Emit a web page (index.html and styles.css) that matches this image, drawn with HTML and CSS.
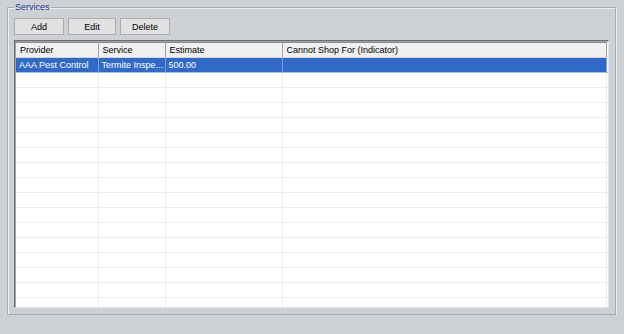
FILE: index.html
```html
<!DOCTYPE html>
<html>
<head>
  <meta charset="UTF-8">
  <title>Services</title>
  <link rel="stylesheet" href="styles.css">
</head>
<body>
  <fieldset class="group">
    <legend class="group-title">Services</legend>

    <div class="toolbar">
      <button class="btn btn-add">Add</button>
      <button class="btn btn-edit">Edit</button>
      <button class="btn btn-delete">Delete</button>
    </div>

    <div class="listview">
      <table class="grid">
        <colgroup>
          <col class="c-provider">
          <col class="c-service">
          <col class="c-estimate">
          <col class="c-indicator">
          <col>
        </colgroup>
        <thead>
          <tr>
            <th>Provider</th>
            <th>Service</th>
            <th>Estimate</th>
            <th>Cannot Shop For (Indicator)</th>
            <th class="filler"></th>
          </tr>
        </thead>
        <tbody>
          <tr class="selected">
            <td>AAA Pest Control</td>
            <td>Termite Inspe...</td>
            <td>500.00</td>
            <td></td>
            <td class="filler"></td>
          </tr>
          <tr><td></td><td></td><td></td><td></td><td class="filler"></td></tr>
          <tr><td></td><td></td><td></td><td></td><td class="filler"></td></tr>
          <tr><td></td><td></td><td></td><td></td><td class="filler"></td></tr>
          <tr><td></td><td></td><td></td><td></td><td class="filler"></td></tr>
          <tr><td></td><td></td><td></td><td></td><td class="filler"></td></tr>
          <tr><td></td><td></td><td></td><td></td><td class="filler"></td></tr>
          <tr><td></td><td></td><td></td><td></td><td class="filler"></td></tr>
          <tr><td></td><td></td><td></td><td></td><td class="filler"></td></tr>
          <tr><td></td><td></td><td></td><td></td><td class="filler"></td></tr>
          <tr><td></td><td></td><td></td><td></td><td class="filler"></td></tr>
          <tr><td></td><td></td><td></td><td></td><td class="filler"></td></tr>
          <tr><td></td><td></td><td></td><td></td><td class="filler"></td></tr>
          <tr><td></td><td></td><td></td><td></td><td class="filler"></td></tr>
          <tr><td></td><td></td><td></td><td></td><td class="filler"></td></tr>
          <tr><td></td><td></td><td></td><td></td><td class="filler"></td></tr>
          <tr><td></td><td></td><td></td><td></td><td class="filler"></td></tr>
        </tbody>
      </table>
    </div>
  </fieldset>
</body>
</html>
```

FILE: styles.css
```css
html {
  background: #cdd1d5;
}
body {
  margin: 0;
  padding: 2px 0 0 0;
  font-family: "Liberation Sans", Arial, sans-serif;
  font-size: 9px;
  color: #000;
}

/* group box with etched border */
.group {
  margin: 0 8px 0 7px;
  padding: 6px 6px 6px 6px;
  border: 1px solid #a8acb0;
  box-shadow: inset 1px 1px 0 #eef0f1, 1px 1px 0 #eef0f1;
}
.group-title {
  margin-left: 0;
  padding: 0 1px;
  color: #1f318e;
  font-size: 9px;
}

.toolbar {
  display: flex;
  gap: 4px;
  height: 17px;
}
.btn {
  height: 17px;
  padding: 0;
  font-family: inherit;
  font-size: 9px;
  color: #000;
  background: #e1e1e1;
  border: 1px solid #adadad;
  border-radius: 0;
}
.btn-add { width: 50px; }
.btn-edit { width: 48px; }
.btn-delete { width: 50px; }

/* list view */
.listview {
  margin-top: 5px;
  height: 268px;
  box-sizing: border-box;
  background: #fff;
  border-top: 1px solid #6e6e6e;
  border-left: 1px solid #6e6e6e;
  border-right: 1px solid #e6e6e6;
  border-bottom: 1px solid #e6e6e6;
  box-shadow: inset 1px 1px 0 #a0a0a0;
  padding: 1px 0 0 1px;
  overflow: hidden;
}
.grid {
  border-collapse: collapse;
  table-layout: fixed;
  width: 100%;
}
.c-provider { width: 82px; }
.c-service { width: 67px; }
.c-estimate { width: 117px; }
.c-indicator { width: 324px; }

.grid th {
  height: 14px;
  padding: 0 4px;
  text-align: left;
  font-weight: normal;
  background: #f0f0f0;
  border-top: 1px solid #8c8c8c;
  border-bottom: 1px solid #d5d5d5;
  border-right: 1px solid #a0a0a0;
  white-space: nowrap;
  overflow: hidden;
}
.grid th.filler {
  background: #fff;
  border: none;
}
.grid td {
  height: 14px;
  padding: 0 3px;
  border-bottom: 1px solid #ececec;
  border-right: 1px solid #ececec;
  white-space: nowrap;
  overflow: hidden;
}
.grid td.filler {
  border-right: none;
}
.grid tr.selected td {
  background: #3169c6;
  color: #fff;
  border-right-color: #7a9ed8;
  border-bottom-color: #a9c1e8;
}
.grid tr.selected td.filler {
  background: #fff;
}
```
